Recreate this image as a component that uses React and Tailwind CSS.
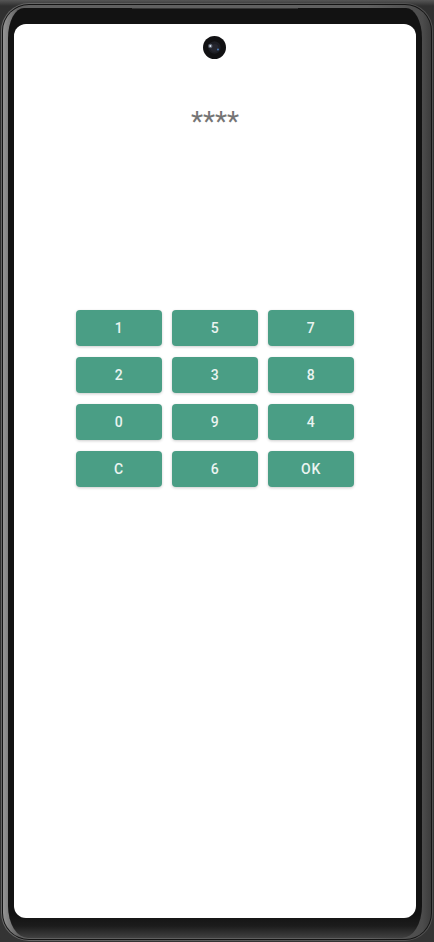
const keys = ["1", "5", "7", "2", "3", "8", "0", "9", "4", "C", "6", "OK"];

function Camera() {
  return (
    <svg className="size-6" viewBox="0 0 24 24" aria-hidden="true">
      <circle cx="11.5" cy="11.5" r="11.5" fill="#111113" />
      <circle cx="11.5" cy="11.5" r="6.2" fill="#1d1e24" />
      <circle cx="11.5" cy="12" r="4" fill="#25262e" />
      <circle cx="7.3" cy="10" r="2.2" fill="#59606b" />
      <circle cx="7.3" cy="10" r="1" fill="#dbe3f4" />
      <circle cx="15" cy="13.5" r="0.9" fill="#4b83c8" />
    </svg>
  );
}

function Phone({ children }) {
  return (
    <div className="flex min-h-screen bg-[linear-gradient(to_bottom,#565656_0px,#303030_6px,#343434_100%)] px-px pt-[3px] pb-px">
      <div className="flex grow rounded-[28px] bg-gradient-to-r from-[#686868] to-[#505050] p-px">
        <div className="flex grow rounded-[27px] bg-[#141414] p-px">
          <div className="flex grow rounded-[26px] bg-[linear-gradient(to_right,#949494_0px,#828282_5px,#606060_16px,#606060_85%,#4c4c4c_98%,#3c3c3c_100%)] pt-[3px] pr-[9px] pb-px pl-[5px]">
            <div className="relative flex grow flex-col rounded-[16px_16px_20px_20px/30px_30px_32px_32px] bg-[linear-gradient(to_top,#414141_0px,#1c1c1c_12px,#121212_24px)] px-[6px] pt-4 pb-[20px]">
              <div className="absolute top-0 left-[30%] h-px w-2/5 bg-[#343434]" />
              {children}
            </div>
          </div>
        </div>
      </div>
    </div>
  );
}

export default function App() {
  return (
    <Phone>
      <main className="flex grow flex-col items-center rounded-xl bg-white px-4 pt-3 font-[Roboto,sans-serif]">
        <Camera />
        <output
          aria-label="Entered PIN"
          className="mt-11 block text-[28px] leading-9 text-[#757575]"
        >
          ****
        </output>
        <div className="mt-[170px] grid w-full max-w-[278px] grid-cols-3 gap-x-[10px] gap-y-[11px]">
          {keys.map((key) => (
            <button
              key={key}
              type="button"
              className="h-9 rounded bg-[#4a9e85] text-sm font-medium tracking-wider text-[#eaf4f1] shadow-[0_1px_3px_rgba(0,0,0,0.2)]"
            >
              {key}
            </button>
          ))}
        </div>
      </main>
    </Phone>
  );
}
